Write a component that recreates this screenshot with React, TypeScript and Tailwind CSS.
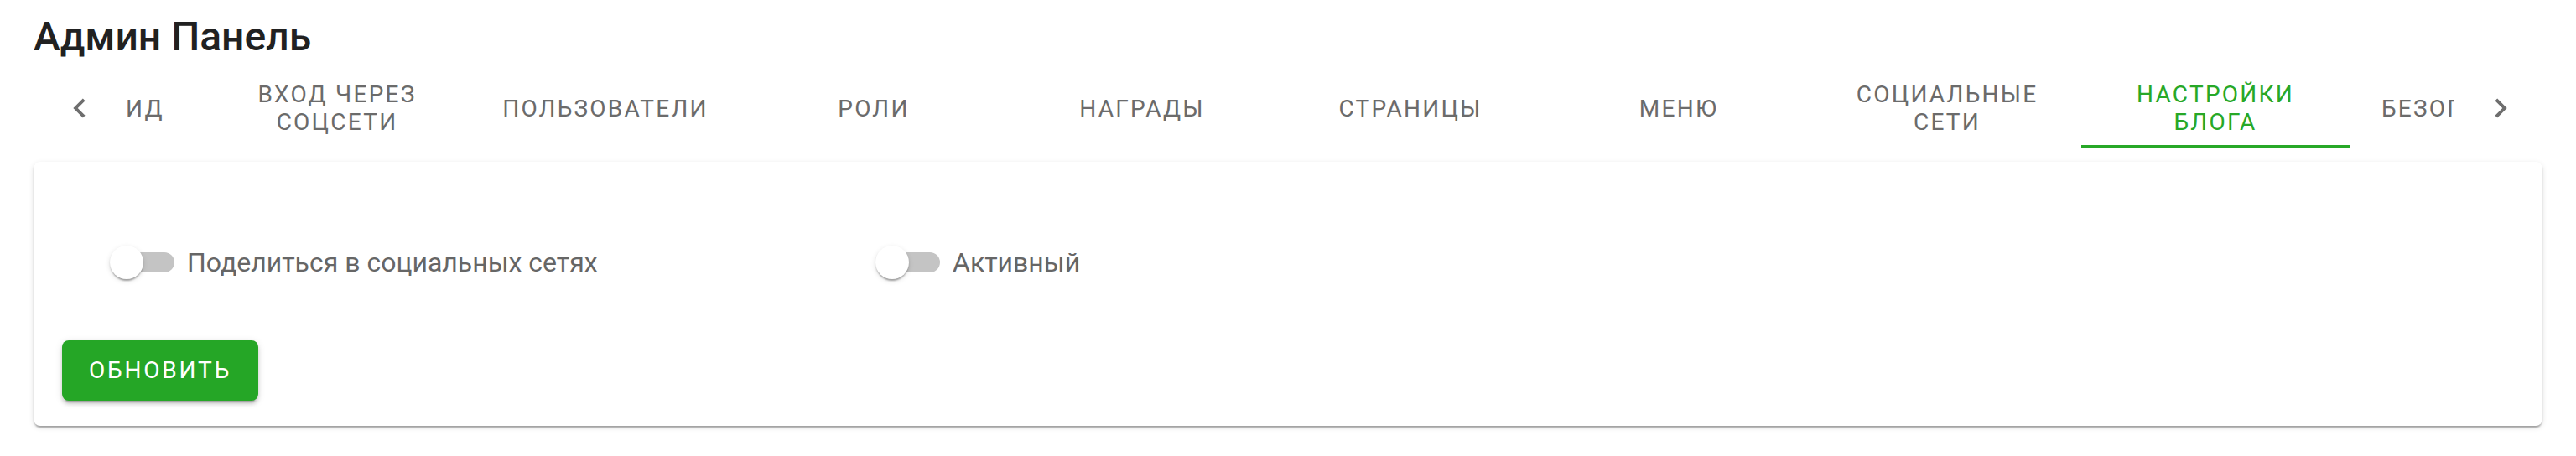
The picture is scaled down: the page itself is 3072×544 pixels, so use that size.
import React from "react";

type Tab = { label: string; w: number; active?: boolean };

const tabs: Tab[] = [
  { label: "ИД", w: 138 },
  { label: "Вход через соцсети", w: 320 },
  { label: "Пользователи", w: 320 },
  { label: "Роли", w: 320 },
  { label: "Награды", w: 320 },
  { label: "Страницы", w: 320 },
  { label: "Меню", w: 320 },
  { label: "Социальные сети", w: 320 },
  { label: "Настройки блога", w: 320, active: true },
  { label: "Безопасность", w: 320 },
];

function ChevronLeft() {
  return (
    <svg width="46" height="46" viewBox="0 0 24 24" fill="currentColor">
      <path d="M15.41 16.59L10.83 12l4.58-4.59L14 6l-6 6 6 6 1.41-1.41z" />
    </svg>
  );
}

function ChevronRight() {
  return (
    <svg width="46" height="46" viewBox="0 0 24 24" fill="currentColor">
      <path d="M8.59 16.59L13.17 12 8.59 7.41 10 6l6 6-6 6-1.41-1.41z" />
    </svg>
  );
}

function Switch() {
  return (
    <div className="relative h-[40px] w-[78px] shrink-0">
      <div className="absolute left-[9px] top-[8px] h-[24px] w-[68px] rounded-full bg-[#c4c4c4]" />
      <div className="absolute left-0 top-0 h-[40px] w-[40px] rounded-full bg-white shadow-[0_4px_2px_-2px_rgba(0,0,0,0.2),0_2px_2px_0_rgba(0,0,0,0.14),0_2px_6px_0_rgba(0,0,0,0.12)]" />
    </div>
  );
}

export default function App() {
  return (
    <div className="min-h-[544px] bg-white px-[40px] font-['Roboto','Noto_Sans',sans-serif]">
      <h1 className="pt-[16px] text-[48px] font-medium leading-[56px] text-[#212121]">
        Админ Панель
      </h1>

      <div className="mt-[9px] flex h-[96px] items-center">
        <div className="ml-[15px] flex h-full w-[80px] shrink-0 items-center justify-center text-[#6e6e6e]">
          <ChevronLeft />
        </div>
        <div className="h-full flex-1 overflow-hidden">
          <div className="ml-[-31px] flex h-full">
            {tabs.map((t) => (
              <div
                key={t.label}
                style={{ width: t.w }}
                className={
                  "relative flex h-full shrink-0 items-center justify-center px-[32px] text-center text-[28px] uppercase leading-[33px] tracking-[0.08em] " +
                  (t.active ? "text-[#27a827]" : "text-[#6b6b6b]")
                }
              >
                <span>{t.label}</span>
                {t.active && (
                  <div className="absolute bottom-0 left-0 right-0 h-[4px] bg-[#27a827]" />
                )}
              </div>
            ))}
          </div>
        </div>
        <div className="mr-[-6px] flex h-full w-[112px] shrink-0 items-center justify-center text-[#6e6e6e]">
          <ChevronRight />
        </div>
      </div>

      <div className="mt-[16px] h-[315px] rounded-[8px] bg-white pl-[34px] pt-[96px] shadow-[0_4px_2px_-2px_rgba(0,0,0,0.2),0_2px_2px_0_rgba(0,0,0,0.14),0_2px_6px_0_rgba(0,0,0,0.12)]">
        <div className="flex h-[48px] items-center">
          <div className="ml-[57px] flex w-[913px] items-center">
            <Switch />
            <span className="ml-[14px] text-[32px] leading-[48px] text-[#666666]">
              Поделиться в социальных сетях
            </span>
          </div>
          <div className="flex items-center">
            <Switch />
            <span className="ml-[14px] text-[32px] leading-[48px] text-[#666666]">
              Активный
            </span>
          </div>
        </div>
        <button className="mt-[69px] flex h-[72px] w-[234px] items-center justify-center rounded-[8px] bg-[#25a626] text-[28px] font-normal uppercase tracking-[0.1em] text-white shadow-[0_6px_2px_-4px_rgba(0,0,0,0.2),0_4px_4px_0_rgba(0,0,0,0.14),0_2px_10px_0_rgba(0,0,0,0.12)]">
          Обновить
        </button>
      </div>
    </div>
  );
}
